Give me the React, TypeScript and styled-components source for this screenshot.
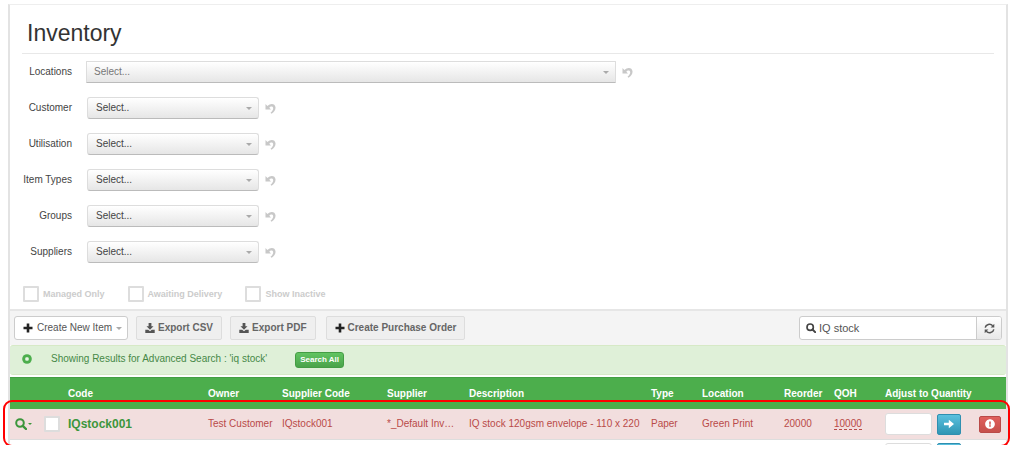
import React from 'react';
import styled, { createGlobalStyle, css } from 'styled-components';
import { FaExclamationCircle } from 'react-icons/fa';

const GlobalStyle = createGlobalStyle`
  *, *::before, *::after { box-sizing: border-box; }
  body {
    margin: 0;
    background: #fff;
    color: #444;
    font-family: "Liberation Sans", Arial, sans-serif;
    font-size: 10px;
    line-height: 16px;
  }
  button, input, select { font: inherit; color: inherit; margin: 0; }
`;

const Page = styled.main`
  margin: 4px 5px 0 8px;
  border: 2px solid #e3e3e3;
  border-top: 1px solid #eee;
  border-bottom: 0;
`;

const Title = styled.h1`
  margin: 0 12px;
  padding: 12px 5px 4px;
  border-bottom: 1px solid #e8e8e8;
  color: #333;
  font-size: 23px;
  font-weight: 400;
  line-height: 32px;
`;

const Filters = styled.form`
  display: flex;
  flex-direction: column;
  gap: 14px;
  padding-top: 7px;
`;

const FilterRow = styled.div`
  display: flex;
  align-items: center;
  height: 22px;
`;

const FilterLabel = styled.label`
  width: 62px;
  text-align: right;
`;

const SelectBox = styled.span<{ $wide?: boolean }>`
  position: relative;
  flex: 0 1 ${(p) => (p.$wide ? 530 : 172)}px;
  margin: 0 6px 0 ${(p) => (p.$wide ? 14 : 15)}px;
`;

const Select = styled.select<{ $wide?: boolean }>`
  display: block;
  width: 100%;
  height: 22px;
  padding: 0 20px 0 ${(p) => (p.$wide ? 7 : 8)}px;
  appearance: none;
  border: 1px solid #ddd;
  border-bottom-color: #bbb;
  border-radius: ${(p) => (p.$wide ? 1 : 3)}px;
  background: linear-gradient(#fff, #e6e6e6);
  color: ${(p) => (p.$wide ? '#777' : '#444')};
`;

const Caret = styled.i<{ $color?: string; $size?: number }>`
  display: inline-block;
  border: ${(p) => p.$size || 3}px solid transparent;
  border-top-color: ${(p) => p.$color || '#aaa'};
  border-bottom: 0;
`;

const SelectCaret = styled(Caret)`
  position: absolute;
  top: 10px;
  right: 7px;
  pointer-events: none;
`;

const IconButton = styled.button<{ $color: string }>`
  display: inline-flex;
  align-items: center;
  padding: 0;
  gap: 1px;
  border: 0;
  background: none;
  color: ${(p) => p.$color};
`;

const Checks = styled.div`
  display: flex;
  align-items: center;
  gap: 23px;
  padding: 9px 13px 2px;
`;

const CheckLabel = styled.label`
  display: flex;
  align-items: center;
  gap: 4px;
  color: #ccc;
  font-size: 9px;
  font-weight: 700;
`;

const Check = styled.input`
  width: 16px;
  height: 16px;
  appearance: none;
  border: 2px solid #ddd;
  border-radius: 1px;
  background: #fff;
`;

const Toolbar = styled.div`
  display: flex;
  align-items: center;
  gap: 8px;
  margin-top: 5px;
  padding: 5px 4px;
  border-top: 2px solid #e6e6e6;
  background: #f4f4f4;
`;

const ToolButton = styled.button<{ $primary?: boolean; $spaced?: boolean }>`
  display: flex;
  align-items: center;
  justify-content: center;
  gap: 3px;
  height: 24px;
  padding: 0 8px;
  border: 1px solid #ddd;
  border-radius: 2px;
  background: #efefef;
  color: #666;
  font-weight: 700;
  white-space: nowrap;
  ${(p) => p.$spaced && css`margin-left: 2px;`}
  ${(p) => p.$primary && css`
    gap: 4px;
    padding: 0 5px 0 8px;
    border-color: #ccc;
    border-radius: 3px;
    background: #fff;
    color: #555;
    font-weight: 400;
  `}
`;

const Search = styled.div`
  display: flex;
  flex: 0 1 203px;
  margin-left: auto;
  height: 24px;
  border: 1px solid #ccc;
  border-radius: 3px;
  background: #fff;
  overflow: hidden;
`;

const SearchField = styled.label`
  display: flex;
  flex: 1;
  align-items: center;
  gap: 3px;
  min-width: 0;
  padding-left: 6px;
`;

const SearchInput = styled.input`
  flex: 1;
  min-width: 0;
  padding: 0;
  border: 0;
  outline: 0;
  background: none;
  color: #555;
  font-size: 11px;
`;

const Refresh = styled.button`
  display: flex;
  align-items: center;
  justify-content: center;
  width: 25px;
  padding: 0;
  border: 0;
  border-left: 1px solid #ccc;
  background: linear-gradient(#fff, #e8e8e8);
`;

const Notice = styled.div`
  display: flex;
  align-items: center;
  height: 30px;
  padding: 0 12px 2px;
  border: 1px solid #d6e9c6;
  border-width: 1px 0;
  border-radius: 3px;
  background: #dff0d8;
  color: #468847;
`;

const NoticeText = styled.span`
  margin: 0 28px 0 19px;
`;

const SmallButton = styled.button`
  height: 16px;
  margin-top: 2px;
  padding: 0 4px;
  border: 1px solid #449d44;
  border-radius: 3px;
  background: linear-gradient(#62c462, #4aa34a);
  color: #fff;
  font-size: 8px;
  font-weight: 700;
  line-height: 14px;
`;

const TableArea = styled.div`
  position: relative;
  margin-top: 2px;
`;

const Table = styled.table`
  width: 100%;
  table-layout: fixed;
  border-collapse: separate;
  border-spacing: 0;
  text-align: left;
  white-space: nowrap;
`;

const Th = styled.th`
  height: 32px;
  padding: 0;
  border-top: 1px solid #449d44;
  background: #4cae4c;
  color: #fff;
`;

const Td = styled.td`
  height: 31px;
  padding: 0;
  border-bottom: 1px solid #ddd;
  background: #f2dede;
  color: #b94a48;
`;

const NextTd = styled.td`
  padding: 0;
`;

const Tools = styled.div`
  display: flex;
  align-items: center;
  gap: 12px;
  padding-left: 5px;
`;

const CodeLink = styled.a`
  color: #3c963c;
  font-size: 12px;
  font-weight: 700;
  text-decoration: none;
`;

const Quantity = styled.a`
  border-bottom: 1px dashed #b94a48;
  color: inherit;
  text-decoration: none;
`;

const Adjust = styled.div`
  display: flex;
  align-items: center;
  gap: 5px;
`;

const Clip = styled(Adjust)`
  align-items: flex-start;
  height: 5px;
  padding-top: 3px;
  overflow: hidden;
`;

const AdjustInput = styled.input`
  width: 47px;
  height: 22px;
  border: 1px solid #ddd;
  border-radius: 3px;
  background: #fff;
`;

const Action = styled.button<{ $danger?: boolean }>`
  display: flex;
  align-items: center;
  justify-content: center;
  width: ${(p) => (p.$danger ? 22 : 24)}px;
  height: ${(p) => (p.$danger ? 17 : 21)}px;
  padding: 0;
  border: 1px solid ${(p) => (p.$danger ? '#b94a48' : '#2f8fb0')};
  border-radius: 2px;
  background: ${(p) => (p.$danger ? 'linear-gradient(#e0605c, #c64f4b)' : 'linear-gradient(#5bc0de, #2f96b4)')};
  color: #fff;
`;

const Highlight = styled.div`
  position: absolute;
  top: 23px;
  right: -4px;
  bottom: -2px;
  left: -7px;
  border: 2px solid #f00;
  border-radius: 9px;
  pointer-events: none;
`;

const UndoIcon = () => (
  <svg width="11" height="11" viewBox="0 0 11 11" aria-hidden="true">
    <path d="M.5 1v5.500h5.500L4.300 4.800C5.500 2.900 8.200 3 8.200 5.300c0 1.700-1 3-2.700 4.500l1 1C9.200 9 10.700 7 10.500 4.300 10.200.2 5.400-.2 2.400 3z" fill="#c8c8c8" />
  </svg>
);

const PlusIcon = () => (
  <svg width="10" height="10" viewBox="0 0 10 10" stroke="#222" strokeWidth="2.600" aria-hidden="true">
    <path d="M5 .5v9M.5 5h9" />
  </svg>
);

const SearchIcon = ({ size, color }: { size: number; color: string }) => (
  <svg width={size} height={size} viewBox="0 0 12 12" fill="none" stroke={color} aria-hidden="true">
    <circle cx="5" cy="5" r="3.800" strokeWidth="2" />
    <path d="M7.800 7.800L11 11" strokeWidth="2.400" strokeLinecap="round" />
  </svg>
);

const DownloadIcon = () => (
  <svg width="10" height="10" viewBox="0 0 10 10" fill="#555" aria-hidden="true">
    <path d="M3.600 0h2.800v3.200h2.100L5 6.700 1.500 3.200h2.100z" />
    <path d="M.3 6.800h2.900L5 8.300l1.800-1.500h2.900V10H.3z" />
  </svg>
);

const ArrowIcon = () => (
  <svg width="10" height="10" viewBox="0 0 10 10" fill="#fff" aria-hidden="true">
    <path d="M0 3.700h4.800V.8L10 5 4.800 9.200V6.300H0z" />
  </svg>
);

const RefreshIcon = () => (
  <svg width="11" height="11" viewBox="0 0 11 11" fill="none" stroke="#555" strokeWidth="1.500" aria-hidden="true">
    <path d="M1.200 4.700C1.800 1.300 6.300.2 8.700 2.800M9.800 6.300C9.200 9.700 4.700 10.800 2.300 8.200" />
    <path d="M10.300.8v3.700H6.600zM.7 10.200V6.500h3.700z" fill="#555" stroke="none" />
  </svg>
);

const ClearIcon = () => (
  <svg width="10" height="10" viewBox="0 0 10 10" aria-hidden="true">
    <circle cx="5" cy="5" r="4.800" fill="#4cae4c" />
    <path d="M3.600 3.600l2.800 2.800M6.400 3.600L3.600 6.400" stroke="#e8f5e4" strokeWidth="1.800" />
  </svg>
);

const filters = [
  { label: 'Locations', text: 'Select...', wide: true },
  { label: 'Customer', text: 'Select..' },
  { label: 'Utilisation', text: 'Select...' },
  { label: 'Item Types', text: 'Select...' },
  { label: 'Groups', text: 'Select...' },
  { label: 'Suppliers', text: 'Select...' },
];

const columns = [
  { title: '', width: 58 },
  { title: 'Code', width: 140 },
  { title: 'Owner', width: 74 },
  { title: 'Supplier Code', width: 105 },
  { title: 'Supplier', width: 82 },
  { title: 'Description', width: 182 },
  { title: 'Type', width: 51 },
  { title: 'Location', width: 82 },
  { title: 'Reorder', width: 50 },
  { title: 'QOH', width: 51 },
  { title: 'Adjust to Quantity', width: 94 },
  { title: '', width: 27 },
];

export default function App() {
  return (
    <>
      <GlobalStyle />
      <Page>
        <Title>Inventory</Title>
        <Filters>
          {filters.map((f) => (
            <FilterRow key={f.label}>
              <FilterLabel htmlFor={f.label}>{f.label}</FilterLabel>
              <SelectBox $wide={f.wide}>
                <Select id={f.label} $wide={f.wide}>
                  <option>{f.text}</option>
                </Select>
                <SelectCaret />
              </SelectBox>
              <IconButton type="button" $color="#c4c4c4" aria-label={`Reset ${f.label}`}>
                <UndoIcon />
              </IconButton>
            </FilterRow>
          ))}
          <Checks>
            {['Managed Only', 'Awaiting Delivery', 'Show Inactive'].map((text) => (
              <CheckLabel key={text}>
                <Check type="checkbox" />
                {text}
              </CheckLabel>
            ))}
          </Checks>
        </Filters>

        <Toolbar>
          <ToolButton $primary>
            <PlusIcon />
            Create New Item
            <Caret />
          </ToolButton>
          <ToolButton>
            <DownloadIcon />
            Export CSV
          </ToolButton>
          <ToolButton>
            <DownloadIcon />
            Export PDF
          </ToolButton>
          <ToolButton $spaced>
            <PlusIcon />
            Create Purchase Order
          </ToolButton>
          <Search>
            <SearchField>
              <SearchIcon size={10} color="#444" />
              <SearchInput aria-label="Search" defaultValue="IQ stock" />
            </SearchField>
            <Refresh aria-label="Refresh">
              <RefreshIcon />
            </Refresh>
          </Search>
        </Toolbar>

        <Notice>
          <IconButton $color="#4cae4c" aria-label="Clear search">
            <ClearIcon />
          </IconButton>
          <NoticeText>Showing Results for Advanced Search : 'iq stock'</NoticeText>
          <SmallButton>Search All</SmallButton>
        </Notice>

        <TableArea>
          <Table>
            <colgroup>
              {columns.map((c, i) => (
                <col key={i} width={c.width} />
              ))}
            </colgroup>
            <thead>
              <tr>
                {columns.map((c, i) => (
                  <Th key={i}>{c.title}</Th>
                ))}
              </tr>
            </thead>
            <tbody>
              <tr>
                <Td>
                  <Tools>
                    <IconButton $color="#3c963c" aria-label="Item actions">
                      <SearchIcon size={12} color="#3c963c" />
                      <Caret $color="#3c963c" $size={2} />
                    </IconButton>
                    <Check type="checkbox" aria-label="Select IQstock001" />
                  </Tools>
                </Td>
                <Td><CodeLink href="#item">IQstock001</CodeLink></Td>
                <Td>Test Customer</Td>
                <Td>IQstock001</Td>
                <Td>*_Default Inv…</Td>
                <Td>IQ stock 120gsm envelope - 110 x 220</Td>
                <Td>Paper</Td>
                <Td>Green Print</Td>
                <Td>20000</Td>
                <Td><Quantity href="#quantity">10000</Quantity></Td>
                <Td>
                  <Adjust>
                    <AdjustInput aria-label="Adjust to quantity" />
                    <Action aria-label="Apply"><ArrowIcon /></Action>
                  </Adjust>
                </Td>
                <Td>
                  <Action $danger aria-label="Alert"><FaExclamationCircle size={10} /></Action>
                </Td>
              </tr>
              <tr>
                <NextTd colSpan={10} />
                <NextTd>
                  <Clip>
                    <AdjustInput aria-label="Adjust next item to quantity" />
                    <Action aria-label="Apply to next item" />
                  </Clip>
                </NextTd>
                <NextTd />
              </tr>
            </tbody>
          </Table>
          <Highlight />
        </TableArea>
      </Page>
    </>
  );
}
